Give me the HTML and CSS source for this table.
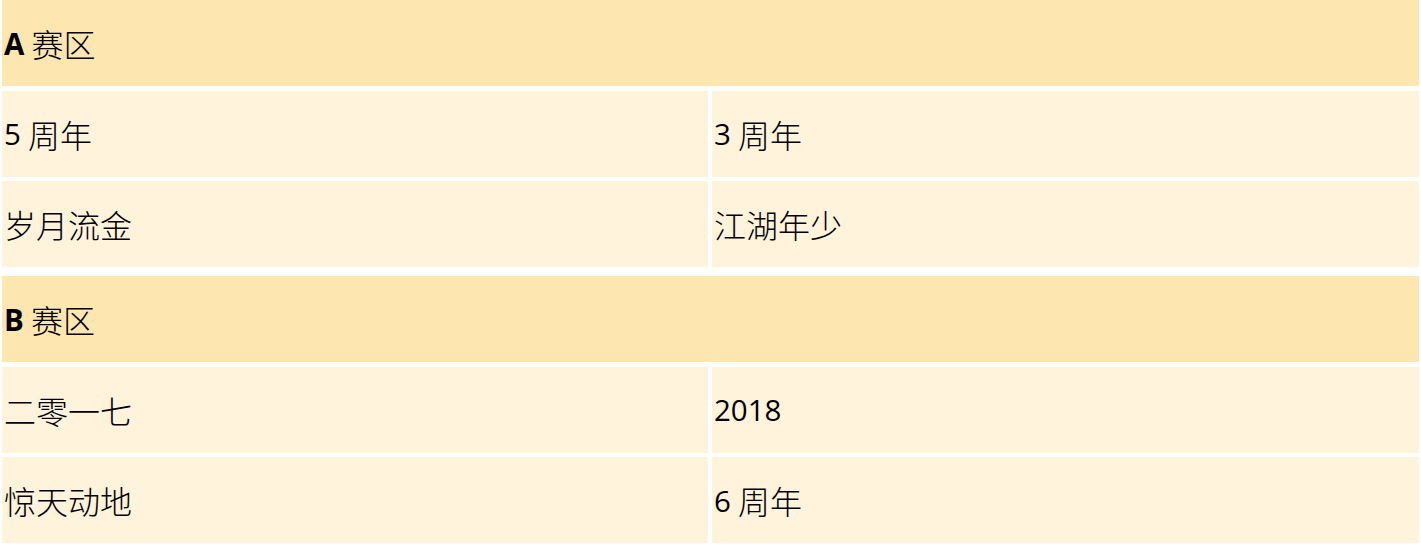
FILE: index.html
```html
<!DOCTYPE html>
<html lang="zh-CN">
<head>
<meta charset="utf-8">
<title>赛区</title>
<link rel="stylesheet" href="styles.css">
</head>
<body>
<div class="board">
  <section class="zone">
    <div class="cell head"><b class="lat">A</b> 赛区</div>
    <div class="cell"><span class="lat">5</span> 周年</div>
    <div class="cell"><span class="lat">3</span> 周年</div>
    <div class="cell">岁月流金</div>
    <div class="cell">江湖年少</div>
  </section>
  <section class="zone">
    <div class="cell head"><b class="lat">B</b> 赛区</div>
    <div class="cell">二零一七</div>
    <div class="cell"><span class="lat">2018</span></div>
    <div class="cell">惊天动地</div>
    <div class="cell"><span class="lat">6</span> 周年</div>
  </section>
</div>
</body>
</html>
```

FILE: styles.css
```css
html, body {
  margin: 0;
  padding: 0;
  background: #ffffff;
}

.board {
  padding: 0 2px;
  font-family: "Noto Sans CJK SC", "Noto Sans", sans-serif;
  font-size: 32px;
  font-weight: 300;
  color: #000;
}

.zone {
  display: grid;
  grid-template-columns: 706px 707px;
  grid-auto-rows: 86px;
  column-gap: 4px;
  row-gap: 4.5px;
  margin-bottom: 9px;
}

.cell {
  background: #fff3dc;
  display: flex;
  align-items: center;
  padding-left: 2px;
  white-space: pre;
}

.cell.head {
  grid-column: 1 / span 2;
  background: #fde6b0;
}

.lat {
  font-family: "Open Sans", "Liberation Sans", sans-serif;
  font-size: 29.5px;
  font-weight: 400;
}

b.lat {
  font-weight: 700;
}
```
